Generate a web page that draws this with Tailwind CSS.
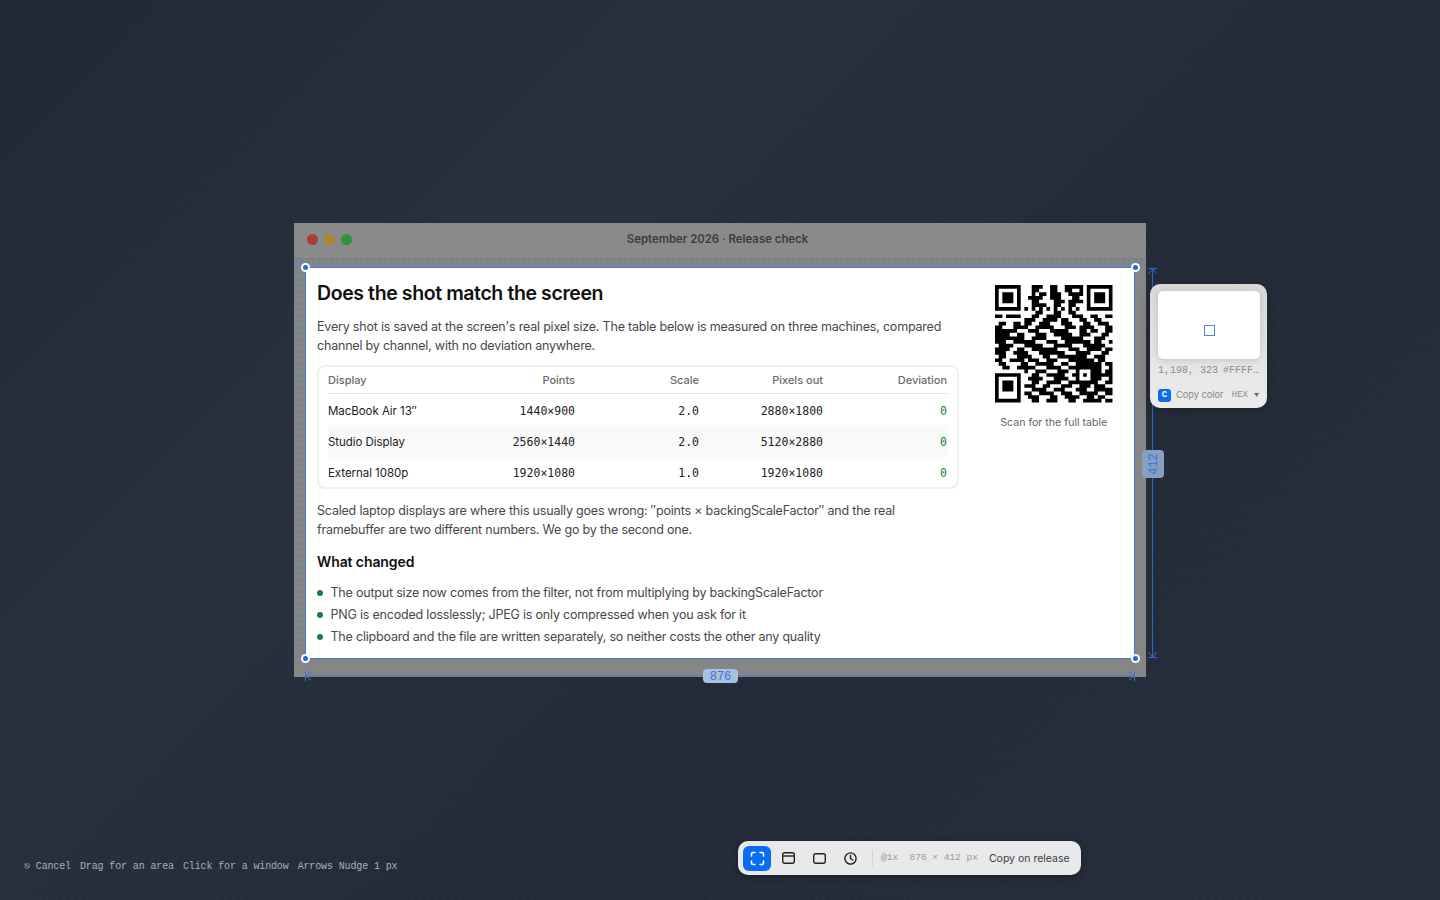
<!DOCTYPE html>
<html lang="en">
<head>
  <meta charset="UTF-8">
  <title>Release check capture</title>
  <script src="https://cdn.jsdelivr.net/npm/@tailwindcss/browser@4"></script>
</head>
<body class="overflow-hidden">
<div class="relative w-[1440px] h-[900px] overflow-hidden bg-[#232b38] bg-[linear-gradient(135deg,#1f2935_0%,#27303e_32%,#232b39_60%,#262d3c_100%)] font-['Inter','Liberation_Sans',sans-serif]">
  <div class="absolute inset-0 bg-[repeating-linear-gradient(120deg,rgba(255,255,255,0.01)_0px,rgba(255,255,255,0.01)_2px,transparent_2px,transparent_7px)]"></div>

  <!-- dimmed window -->
  <div class="absolute left-[294px] top-[223px] w-[852px] h-[454px] bg-[#868686]">
    <div class="relative flex items-center h-[36px] pl-[12.5px] pb-[3px] gap-[6px] bg-[#8a8a8a] border-b border-[#7d7f83]">
      <span class="w-[11px] h-[11px] rounded-full bg-[#a83d39]"></span>
      <span class="w-[11px] h-[11px] rounded-full bg-[#a9872f]"></span>
      <span class="w-[11px] h-[11px] rounded-full bg-[#2f9140]"></span>
      <span class="absolute inset-x-0 pt-[1px] text-center text-[11.4px] font-semibold text-[#3c3c3c] pr-[5px]">September 2026 · Release check</span>
    </div>
    <div class="absolute left-0 top-[36px] w-full h-[7px] bg-[repeating-linear-gradient(90deg,rgba(70,120,200,0.2)_0px,rgba(70,120,200,0.2)_3px,transparent_3px,transparent_6px)]"></div>
    <div class="absolute left-0 top-[36px] w-[10px] h-[400px] bg-[repeating-linear-gradient(0deg,rgba(70,120,200,0.16)_0px,rgba(70,120,200,0.16)_3px,transparent_3px,transparent_6px)]"></div>

    <!-- selected area -->
    <div class="relative ml-[11px] mt-[8px] w-[830px] h-[392px] bg-white outline-[1.5px] -outline-offset-1 outline-[#3f78d6] flex pl-[12px] pt-[14px]">
      <div class="w-[642px]">
        <h1 class="text-[19.5px] leading-[24px] font-semibold text-[#111] tracking-[-0.4px]">Does the shot match the screen</h1>
        <p class="mt-[12px] text-[12.5px] leading-[19px] text-[#484848] tracking-[-0.2px]">Every shot is saved at the screen's real pixel size. The table below is measured on three machines, compared channel by channel, with no deviation anywhere.</p>
        <div class="mt-[10px] w-[642px] h-[124px] rounded-[8px] border-2 border-[#efefef] px-[9px] text-[11.5px] text-[#222]">
          <div class="grid grid-cols-[123px_124px_124px_124px_124px] h-[27px] items-center text-right text-[11px] font-medium text-[#6b6b6b] border-b border-[#e5e6e8]">
            <span class="text-left">Display</span><span>Points</span><span>Scale</span><span>Pixels out</span><span>Deviation</span>
          </div>
          <div class="grid grid-cols-[123px_124px_124px_124px_124px] h-[31px] pt-[4px] items-center text-right font-['DejaVu_Sans_Mono',monospace]">
            <span class="text-left font-['Inter',sans-serif] tracking-[-0.05px]">MacBook Air 13″</span><span>1440×900</span><span>2.0</span><span>2880×1800</span><span class="text-[#16803c]">0</span>
          </div>
          <div class="grid grid-cols-[123px_124px_124px_124px_124px] h-[32px] pt-[4px] items-center text-right font-['DejaVu_Sans_Mono',monospace] bg-[#f9f9f9]">
            <span class="text-left font-['Inter',sans-serif] tracking-[-0.05px]">Studio Display</span><span>2560×1440</span><span>2.0</span><span>5120×2880</span><span class="text-[#16803c]">0</span>
          </div>
          <div class="grid grid-cols-[123px_124px_124px_124px_124px] h-[30px] pt-[4px] items-center text-right font-['DejaVu_Sans_Mono',monospace]">
            <span class="text-left font-['Inter',sans-serif] tracking-[-0.05px]">External 1080p</span><span>1920×1080</span><span>1.0</span><span>1920×1080</span><span class="text-[#16803c]">0</span>
          </div>
        </div>
        <p class="mt-[12px] text-[12.5px] leading-[19px] text-[#484848] tracking-[-0.2px]">Scaled laptop displays are where this usually goes wrong: ″points × backingScaleFactor″ and the real framebuffer are two different numbers. We go by the second one.</p>
        <h2 class="mt-[13px] text-[14px] leading-[20px] font-semibold text-[#111] tracking-[-0.1px]">What changed</h2>
        <ul class="mt-[10px] text-[12.5px] leading-[22px] text-[#484848] tracking-[-0.2px]">
          <li class="flex items-center gap-[8px]"><span class="ml-[-0.5px] w-[6px] h-[6px] rounded-full bg-[#15803d]"></span>The output size now comes from the filter, not from multiplying by backingScaleFactor</li>
          <li class="flex items-center gap-[8px]"><span class="ml-[-0.5px] w-[6px] h-[6px] rounded-full bg-[#15803d]"></span>PNG is encoded losslessly; JPEG is only compressed when you ask for it</li>
          <li class="flex items-center gap-[8px]"><span class="ml-[-0.5px] w-[6px] h-[6px] rounded-full bg-[#15803d]"></span>The clipboard and the file are written separately, so neither costs the other any quality</li>
        </ul>
      </div>
      <div class="ml-[36px] w-[117.5px] flex flex-col items-center pt-[4px]">
        <svg id="qr" class="w-[117.5px] h-[117.5px]" viewBox="0 0 32 32"><path id="qrPath" fill="#000"></path></svg>
        <p class="mt-[13px] whitespace-nowrap text-[10.6px] leading-[14px] text-[#666]">Scan for the full table</p>
      </div>

      <!-- handles -->
      <span class="absolute left-[-2.5px] top-[-2px] w-[5px] h-[5px] rounded-full bg-[#2a66d0] ring-2 ring-white"></span>
      <span class="absolute right-[-2.5px] top-[-2px] w-[5px] h-[5px] rounded-full bg-[#2a66d0] ring-2 ring-white"></span>
      <span class="absolute left-[-2.5px] bottom-[-2px] w-[5px] h-[5px] rounded-full bg-[#2a66d0] ring-2 ring-white"></span>
      <span class="absolute right-[-2.5px] bottom-[-2px] w-[5px] h-[5px] rounded-full bg-[#2a66d0] ring-2 ring-white"></span>
    </div>
  </div>

  <!-- measure lines -->
  <svg class="absolute left-[1146px] top-[264px] w-[14px] h-[398px]" viewBox="0 0 14 398" fill="none" stroke="#2f67c4" stroke-width="1">
    <path d="M6.5 4V394M2 4.5H11M2 393.5H11M2.500 10L6.5 4.500L10.500 10M2.500 388L6.5 393.500L10.500 388"></path>
  </svg>
  <svg class="absolute left-[301px] top-[670px] w-[838px] h-[12px]" viewBox="0 0 838 12" fill="none" stroke="#4a74c0" stroke-width="1">
    <path d="M4 6H834M4.500 1V11M833.500 1V11M10 2L4.500 6L10 10M828 2L833.500 6L828 10"></path>
  </svg>
  <div class="absolute left-[1142px] top-[450px] w-[22px] h-[28px] pl-[1px] rounded-[4px] bg-[#84a0c2] flex items-center justify-center">
    <span class="-rotate-90 font-['Liberation_Mono',monospace] text-[12px] text-[#3a76d2]">412</span>
  </div>
  <div class="absolute left-[703px] top-[669px] w-[35px] h-[14px] pt-[1px] rounded-[4px] bg-[#a7c1de] flex items-center justify-center">
    <span class="font-['Liberation_Mono',monospace] text-[12px] text-[#3a76d2]">876</span>
  </div>

  <!-- colour picker -->
  <div class="absolute left-[1150px] top-[284px] w-[117px] h-[124px] rounded-[10px] bg-[linear-gradient(180deg,#d9d9da,#ececed)] px-[8px] pt-[7px] shadow-[0_2px_8px_rgba(0,0,0,0.25)]">
    <div class="w-[102px] h-[68px] pt-[11px] rounded-[5px] bg-white flex items-center justify-center shadow-[0_1px_6px_rgba(0,0,0,0.15)]">
      <span class="w-[11px] h-[11px] border border-[#4a86d8]"></span>
    </div>
    <div class="mt-[6px] flex justify-between font-['Liberation_Mono',monospace] text-[10px] leading-[12px] text-[#8b8b8b] whitespace-nowrap">
      <span>1,198, 323</span><span>#FFFF…</span>
    </div>
    <div class="mt-[11px] flex items-center text-[9.2px] text-[#8a8a8a]">
      <span class="w-[13px] h-[13px] rounded-[3px] bg-[#0a6cf0] flex items-center justify-center font-['Liberation_Mono',monospace] font-bold text-[9px] text-white">C</span>
      <span class="ml-[5px]">Copy color</span>
      <span class="ml-auto pt-[1px] font-['Liberation_Mono',monospace] text-[9px]">HEX</span>
      <span class="ml-[6px] text-[5px] text-[#666]">▼</span>
    </div>
  </div>

  <!-- hints -->
  <div class="absolute left-[24px] top-[859.5px] flex gap-[9px] font-['Liberation_Mono',monospace] text-[10px] leading-[13px] tracking-[-0.13px] text-[#a8afba] whitespace-nowrap">
    <span>⎋ Cancel</span><span>Drag for an area</span><span>Click for a window</span><span>Arrows Nudge 1 px</span>
  </div>

  <!-- toolbar -->
  <div class="absolute left-[738px] top-[841px] w-[343px] h-[34px] rounded-[10px] bg-[#e8e9eb] flex items-center pl-[5px] text-[#2b2b2b] shadow-[0_2px_8px_rgba(0,0,0,0.3)]">
    <button class="w-[28px] h-[25px] rounded-[6px] bg-[#0a6cf0] flex items-center justify-center">
      <svg class="w-[15px] h-[15px]" viewBox="0 0 15 15" fill="none" stroke="#fff" stroke-width="1.6" stroke-linecap="round"><path d="M1.500 5V3a1.500 1.500 0 0 1 1.500-1.500h2M10 1.500h2A1.500 1.500 0 0 1 13.500 3v2M13.500 10v2a1.500 1.500 0 0 1-1.500 1.500h-2M5 13.500H3A1.500 1.500 0 0 1 1.500 12v-2"></path></svg>
    </button>
    <button class="ml-[3px] w-[28px] h-[25px] flex items-center justify-center">
      <svg class="w-[13px] h-[12px]" viewBox="0 0 13 12" fill="none" stroke="#222" stroke-width="1.4"><rect x="0.700" y="0.700" width="11.600" height="10.600" rx="2"></rect><path d="M1 4H12"></path></svg>
    </button>
    <button class="ml-[3px] w-[28px] h-[25px] flex items-center justify-center">
      <svg class="w-[13px] h-[11px]" viewBox="0 0 13 11" fill="none" stroke="#222" stroke-width="1.4"><rect x="0.700" y="0.700" width="11.600" height="9.600" rx="2"></rect></svg>
    </button>
    <button class="ml-[3px] w-[28px] h-[25px] flex items-center justify-center">
      <svg class="w-[13px] h-[13px]" viewBox="0 0 13 13" fill="none" stroke="#222" stroke-width="1.4" stroke-linecap="round"><circle cx="6.500" cy="6.500" r="5.600"></circle><path d="M6.500 3.200V6.700L8.800 8"></path></svg>
    </button>
    <span class="ml-[8px] w-px h-[16px] bg-[#d2d3d5]"></span>
    <span class="ml-[8px] pt-[1px] font-['Liberation_Mono',monospace] text-[9.5px] text-[#9a9a9a] whitespace-pre">@1x  876 × 412 px</span>
    <span class="ml-[11px] pt-[1px] text-[10.5px] text-[#3f3f3f] whitespace-nowrap">Copy on release</span>
  </div>
</div>

<script>
  // module rows of the code, 32 x 32
  const rows = [
    "11111110001110011001111101111111",
    "10000010001100011001100101000001",
    "10111010001011011100111101011101",
    "10111010011110011100011001011101",
    "10111010001100001110111101011101",
    "10000010001111001100110001000001",
    "11111110101010101010101001111111",
    "00000000000110001100110000000000",
    "11011110001100111100011100110011",
    "00000000111001111011000110011000",
    "01100110110011100011100011001110",
    "11000111100111110001110111100011",
    "11111100011100011111000110110011",
    "11110011000111001111100111000110",
    "11111111001111000011111100011100",
    "11100111111000111001111111011001",
    "01111000111110001111100011111100",
    "11110011001111111000111001111011",
    "11100111100011111110001111000110",
    "01100011110001100111111110011100",
    "11001111011100111000111111101100",
    "01100001100111110011001111111011",
    "00110011111000111100111111111001",
    "00000000100111000111001100011011",
    "11111110001100111110011101011111",
    "10000010011110001111001100011001",
    "10111010001100111100111111110011",
    "10111010111001100011100111011100",
    "10111010001111001110001110011111",
    "10000010110011110011100111110011",
    "10000010011100011001111001101100",
    "11111110001100111000110011111011"
  ];
  const align = ["11111", "10001", "10101", "10001", "11111"];
  let d = "";
  rows.forEach((row, y) => {
    [...row].forEach((cell, x) => {
      const inAlign = x >= 22 && x <= 26 && y >= 22 && y <= 26;
      const on = inAlign ? align[y - 22][x - 22] : cell;
      if (on === "1") d += `M${x} ${y}h1v1h-1z`;
    });
  });
  document.getElementById("qrPath").setAttribute("d", d);
</script>
</body>
</html>
